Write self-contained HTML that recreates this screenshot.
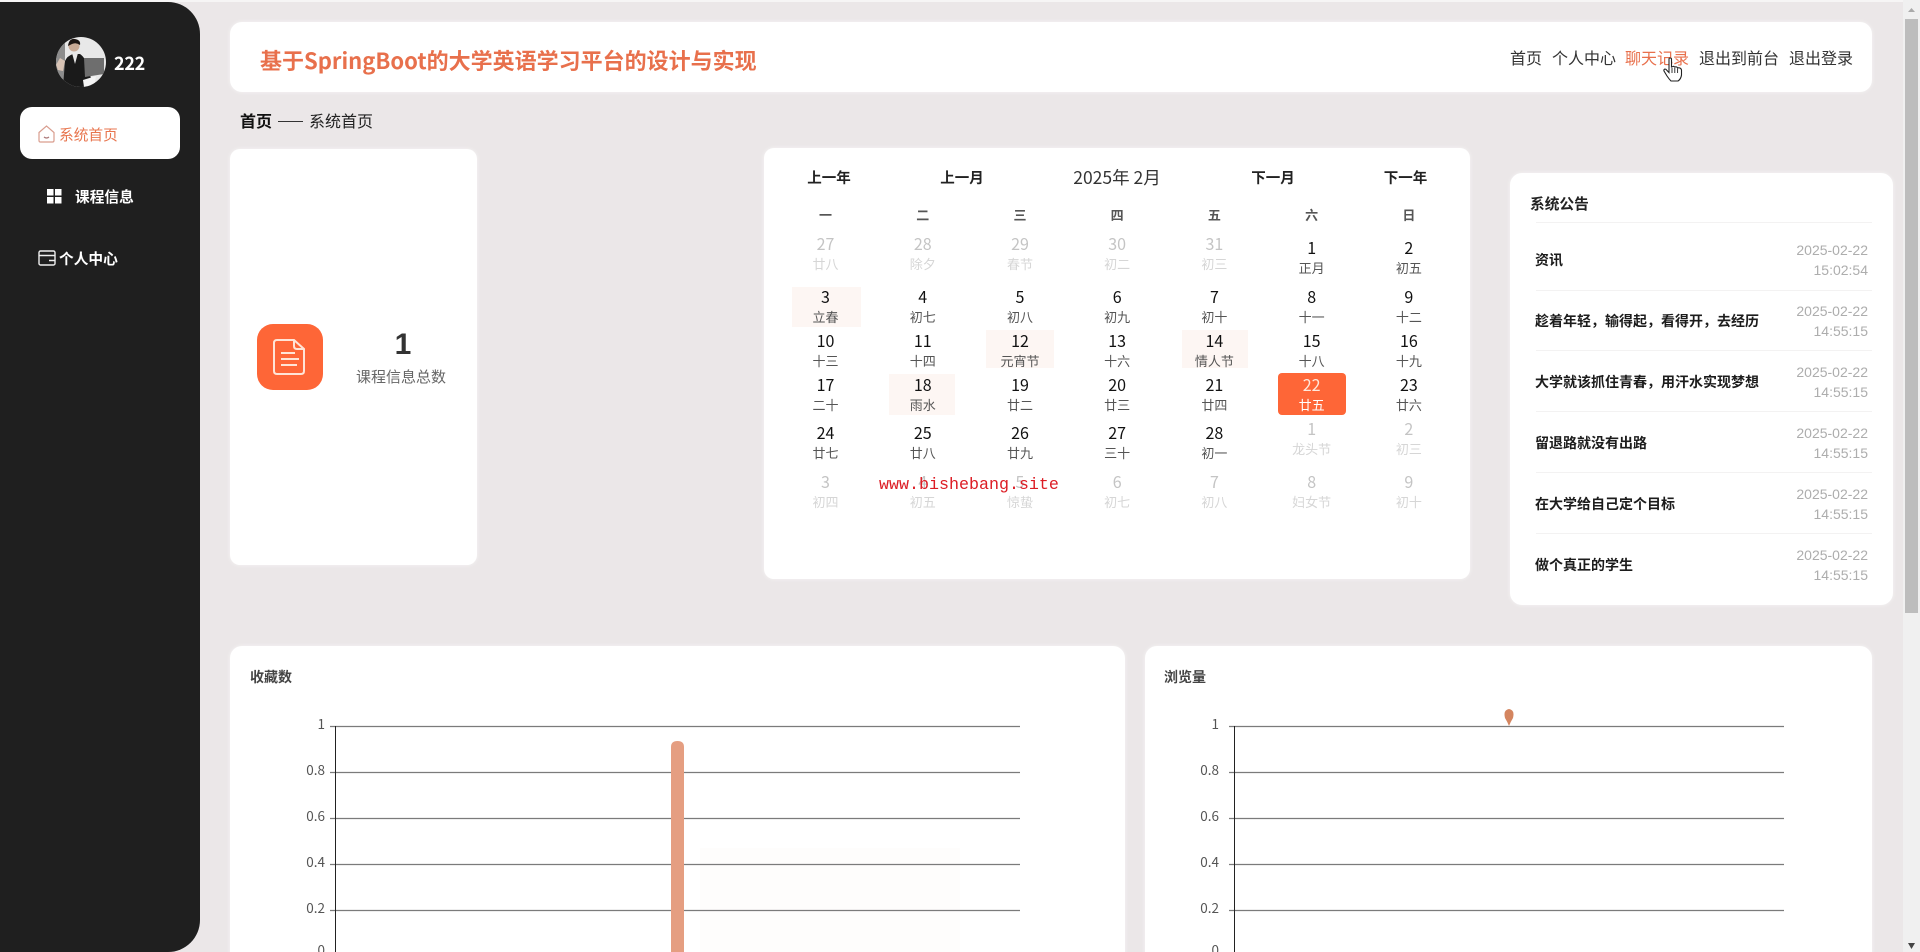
<!DOCTYPE html>
<html lang="zh"><head><meta charset="utf-8"><title>系统首页</title>
<style>
*{box-sizing:border-box;margin:0;padding:0}
html,body{width:1920px;height:952px;overflow:hidden;background:#ebe7e8}
body{position:relative;font-family:"Noto Sans CJK SC","Liberation Sans",sans-serif}
.a{position:absolute;white-space:nowrap}
.card{position:absolute;background:#fff;border-radius:12px;box-shadow:0 0 4px rgba(255,255,255,.6)}
.row{position:absolute;left:776.9px;width:680.6px;display:grid;grid-template-columns:repeat(7,1fr);text-align:center}
.row>div{position:relative}
.row b{display:block;font-weight:400;font-size:16px;line-height:20px;color:#111}
.row i{display:block;font-style:normal;font-size:13px;line-height:20px;margin-top:1px;color:#555}
.row .g b{color:#c4c4c4}.row .g i{color:#d6d6d6}
.row .up{top:-4px}
.hl{position:absolute;background:#fdf6f3}
.n{position:absolute;left:1535px;font-size:14px;font-weight:700;color:#1c1c1c;line-height:20px;white-space:nowrap}
.d{position:absolute;right:52px;width:120px;text-align:right;font-size:14px;line-height:20px;color:#adadad;font-family:"Liberation Sans",sans-serif}
.s{position:absolute;left:1536px;width:336px;height:1px;background:#f3f2f2}
.lb{position:absolute;width:40px;text-align:right;font-size:13.5px;line-height:14px;color:#555;font-family:"Noto Sans CJK SC",sans-serif}
</style></head><body>
<div class="a" style="left:0;top:0;width:1903px;height:2px;background:#f6f5f5"></div>

<!-- sidebar -->
<div class="a" style="left:0;top:2px;width:200px;height:950px;background:#1f1f1f;border-radius:0 32px 32px 0"></div>
<svg class="a" style="left:56px;top:37px" width="50" height="50" viewBox="0 0 50 50">
<defs><clipPath id="av"><circle cx="25" cy="25" r="25"/></clipPath></defs>
<g clip-path="url(#av)"><rect width="50" height="50" fill="#e8e8e8"/>
<rect x="0" y="0" width="9" height="50" fill="#8c8c8c"/>
<path d="M7 50 L9 24 Q11 19 17 17 L24 17 Q30 21 32 32 L38 50Z" fill="#1a1a1a"/>
<circle cx="18" cy="9" r="5.5" fill="#c9a994"/><path d="M12 9 Q13 1 19 2 Q25 3 24 8 Q20 5 16 7Z" fill="#1d1512"/>
<path d="M16 16 L19 27 L22 16Z" fill="#e8e8e8"/>
<path d="M28 21 L48 21 L48 37 L29 40Z" fill="#6e6e6e"/>
<path d="M0 28 L4 21 L9 24 L7 34 L2 33Z" fill="#d8c3b5"/>
<path d="M27 43 L40 39 L38 50 L28 50Z" fill="#f4f4f4"/></g></svg>
<div class="a" style="left:114px;top:50px;font-size:18px;line-height:26px;color:#fff;font-weight:700;font-family:'Noto Sans CJK SC',sans-serif;letter-spacing:-.3px">222</div>

<div class="a" style="left:20px;top:107px;width:160px;height:52px;background:#fff;border-radius:12px"></div>
<svg class="a" style="left:38px;top:125px" width="17" height="18" viewBox="0 0 17 18" fill="none" stroke="#d99d8e" stroke-width="1.2"><path d="M1 7.5 L8.5 1 L16 7.5 V15.5 Q16 17 14.5 17 H2.5 Q1 17 1 15.500Z"/><path d="M6 12 Q8.500 14 11 12" stroke="#a77"/></svg>
<div class="a" style="left:59px;top:125px;font-size:14.7px;line-height:20px;color:#e8764f">系统首页</div>

<svg class="a" style="left:47px;top:189px" width="15" height="15" fill="#fff"><rect width="6.500" height="6.500"/><rect x="8" width="6.500" height="6.500"/><rect y="8" width="6.500" height="6.500"/><rect x="8" y="8" width="6.500" height="6.500"/></svg>
<div class="a" style="left:75px;top:187px;font-size:14.7px;line-height:20px;color:#fff;font-weight:700">课程信息</div>

<svg class="a" style="left:38px;top:250px" width="18" height="16" viewBox="0 0 18 16" fill="none" stroke="#eee" stroke-width="1.4"><rect x="1" y="1" width="16" height="14" rx="1.500"/><path d="M1 5.500H17M11 10.500H17"/></svg>
<div class="a" style="left:59px;top:249px;font-size:14.7px;line-height:20px;color:#fff;font-weight:700">个人中心</div>

<!-- header -->
<div class="card" style="left:230px;top:22px;width:1642px;height:70px"></div>
<div class="a" style="left:260px;top:44px;font-size:22px;line-height:32px;font-weight:700;color:#e8704c">基于SpringBoot的大学英语学习平台的设计与实现</div>
<div class="a" style="left:1510px;top:45px;font-size:16px;line-height:24px;color:#333">首页</div>
<div class="a" style="left:1552px;top:45px;font-size:16px;line-height:24px;color:#333">个人中心</div>
<div class="a" style="left:1625px;top:45px;font-size:16px;line-height:24px;color:#e8704c">聊天记录</div>
<div class="a" style="left:1699px;top:45px;font-size:16px;line-height:24px;color:#333">退出到前台</div>
<div class="a" style="left:1789px;top:45px;font-size:16px;line-height:24px;color:#333">退出登录</div>
<svg class="a" style="left:1663px;top:57px" width="20" height="25" viewBox="0 0 20 25"><path d="M6 2 Q6 1 7 1 Q8.500 1 8.500 2 V10 L10 9.500 Q11 9 11.500 10 L13 9.800 Q14 9.800 14.500 10.800 L16 10.800 Q18 11 18.500 13 L18.500 18 Q18 22 15 24 H8 Q6 22 4 19 L1 14 Q0.500 12.500 2 12 Q3 12 4 13.500 L6 15.500Z" fill="#fff" stroke="#222" stroke-width="1.1"/><path d="M9 11V16M11.800 11V16M14.600 11.500V16" stroke="#222" stroke-width=".9"/></svg>

<!-- breadcrumb -->
<div class="a" style="left:240px;top:108px;font-size:16px;line-height:24px;font-weight:700;color:#111">首页</div>
<div class="a" style="left:278px;top:121px;width:25px;height:1px;background:#333"></div>
<div class="a" style="left:309px;top:108px;font-size:16px;line-height:24px;color:#222">系统首页</div>

<!-- stat card -->
<div class="card" style="left:230px;top:149px;width:247px;height:416px;border-radius:10px"></div>
<div class="a" style="left:257px;top:324px;width:66px;height:66px;border-radius:16px;background:#fe6637"></div>
<svg class="a" style="left:272px;top:338px" width="34" height="38" viewBox="0 0 34 38" fill="none" stroke="#ffe4d6" stroke-width="2"><path d="M5 2 H22 L32 11 V33 Q32 36 29 36 H5 Q2 36 2 33 V5 Q2 2 5 2Z"/><path d="M22 2 V8 Q22 11 25 11 H32"/><path d="M9 15H23M9 21H27M9 27H25"/></svg>
<div class="a" style="left:383px;top:325px;width:40px;text-align:center;font-size:30px;line-height:40px;font-weight:700;color:#333;font-family:'Liberation Sans',sans-serif">1</div>
<div class="a" style="left:356px;top:366px;font-size:15px;line-height:22px;color:#666">课程信息总数</div>

<!-- calendar -->
<div class="card" style="left:764px;top:148px;width:706px;height:431px;border-radius:10px"></div>
<div class="hl" style="left:792px;top:287px;width:69px;height:40px"></div>
<div class="hl" style="left:986px;top:330px;width:68px;height:38px"></div>
<div class="hl" style="left:1182px;top:330px;width:66px;height:38px"></div>
<div class="hl" style="left:889px;top:374px;width:66px;height:41px"></div>
<div class="a" style="left:1278px;top:373px;width:68px;height:42px;background:#fe6637;border-radius:4px"></div>

<div class="a" style="left:829px;top:167px;transform:translateX(-50%);font-size:14.5px;line-height:22px;font-weight:700;color:#222">上一年</div>
<div class="a" style="left:962px;top:167px;transform:translateX(-50%);font-size:14.5px;line-height:22px;font-weight:700;color:#222">上一月</div>
<div class="a" style="left:1117px;top:165px;transform:translateX(-50%);font-size:17.5px;line-height:26px;color:#333">2025年 2月</div>
<div class="a" style="left:1273px;top:167px;transform:translateX(-50%);font-size:14.5px;line-height:22px;font-weight:700;color:#222">下一月</div>
<div class="a" style="left:1405.500px;top:167px;transform:translateX(-50%);font-size:14.5px;line-height:22px;font-weight:700;color:#222">下一年</div>

<div class="row" style="top:205px;font-size:13px;line-height:20px;font-weight:700;color:#555"><div>一</div><div>二</div><div>三</div><div>四</div><div>五</div><div>六</div><div>日</div></div>

<div class="row" style="top:237px">
<div class="g up"><b>27</b><i>廿八</i></div><div class="g up"><b>28</b><i>除夕</i></div><div class="g up"><b>29</b><i>春节</i></div><div class="g up"><b>30</b><i>初二</i></div><div class="g up"><b>31</b><i>初三</i></div><div><b>1</b><i>正月</i></div><div><b>2</b><i>初五</i></div></div>
<div class="row" style="top:286px">
<div><b>3</b><i>立春</i></div><div><b>4</b><i>初七</i></div><div><b>5</b><i>初八</i></div><div><b>6</b><i>初九</i></div><div><b>7</b><i>初十</i></div><div><b>8</b><i>十一</i></div><div><b>9</b><i>十二</i></div></div>
<div class="row" style="top:330px">
<div><b>10</b><i>十三</i></div><div><b>11</b><i>十四</i></div><div><b>12</b><i>元宵节</i></div><div><b>13</b><i>十六</i></div><div><b>14</b><i>情人节</i></div><div><b>15</b><i>十八</i></div><div><b>16</b><i>十九</i></div></div>
<div class="row" style="top:374px">
<div><b>17</b><i>二十</i></div><div><b>18</b><i>雨水</i></div><div><b>19</b><i>廿二</i></div><div><b>20</b><i>廿三</i></div><div><b>21</b><i>廿四</i></div><div><b style="color:#ffe9dd">22</b><i style="color:#fff">廿五</i></div><div><b>23</b><i>廿六</i></div></div>
<div class="row" style="top:422px">
<div><b>24</b><i>廿七</i></div><div><b>25</b><i>廿八</i></div><div><b>26</b><i>廿九</i></div><div><b>27</b><i>三十</i></div><div><b>28</b><i>初一</i></div><div class="g up"><b>1</b><i>龙头节</i></div><div class="g up"><b>2</b><i>初三</i></div></div>
<div class="row" style="top:471px">
<div class="g"><b>3</b><i>初四</i></div><div class="g"><b>4</b><i>初五</i></div><div class="g"><b>5</b><i>惊蛰</i></div><div class="g"><b>6</b><i>初七</i></div><div class="g"><b>7</b><i>初八</i></div><div class="g"><b>8</b><i>妇女节</i></div><div class="g"><b>9</b><i>初十</i></div></div>
<div class="a" style="left:879px;top:476px;font-size:16.67px;line-height:20px;color:#dc1c24;font-family:'Liberation Mono',monospace">www.bishebang.site</div>

<!-- notices -->
<div class="card" style="left:1510px;top:173px;width:383px;height:432px"></div>
<div class="a" style="left:1530px;top:194px;font-size:14.7px;line-height:20px;font-weight:700;color:#222">系统公告</div>
<div class="s" style="top:222px"></div>
<div class="n" style="top:250px">资讯</div><div class="d" style="top:240px">2025-02-22<br>15:02:54</div><div class="s" style="top:290px"></div>
<div class="n" style="top:311px">趁着年轻，输得起，看得开，去经历</div><div class="d" style="top:301px">2025-02-22<br>14:55:15</div><div class="s" style="top:350px"></div>
<div class="n" style="top:372px">大学就该抓住青春，用汗水实现梦想</div><div class="d" style="top:362px">2025-02-22<br>14:55:15</div><div class="s" style="top:411px"></div>
<div class="n" style="top:433px">留退路就没有出路</div><div class="d" style="top:423px">2025-02-22<br>14:55:15</div><div class="s" style="top:472px"></div>
<div class="n" style="top:494px">在大学给自己定个目标</div><div class="d" style="top:484px">2025-02-22<br>14:55:15</div><div class="s" style="top:533px"></div>
<div class="n" style="top:555px">做个真正的学生</div><div class="d" style="top:545px">2025-02-22<br>14:55:15</div>

<!-- charts -->
<div class="card" style="left:230px;top:646px;width:895px;height:340px"></div>
<div class="card" style="left:1145px;top:646px;width:727px;height:340px"></div>
<div class="a" style="left:250px;top:667px;font-size:14px;line-height:20px;font-weight:700;color:#444">收藏数</div>
<div class="a" style="left:1164px;top:667px;font-size:14px;line-height:20px;font-weight:700;color:#444">浏览量</div>

<svg class="a" style="left:0;top:0" width="1920" height="952">
<rect x="700" y="848" width="260" height="104" fill="#fefdfc"/>
<g stroke="#7b7b7b" stroke-width="1.200">
<path d="M330 726.500H1020M330 772.500H1020M330 818.500H1020M330 864.500H1020M330 910.500H1020"/>
<path d="M1229 726.500H1784M1229 772.500H1784M1229 818.500H1784M1229 864.500H1784M1229 910.500H1784"/>
</g>
<path d="M335.500 726V952M1234.500 726V952" stroke="#222" stroke-width="1"/>
<path d="M671 952V747 Q671 741 677.500 741 Q684 741 684 747V952Z" fill="#e59e81"/>
<path d="M1509 726 Q1507.500 722 1505 718 Q1503 710 1509 709 Q1515 710 1513 718 Q1510.500 722 1509 726Z" fill="#d4855f"/>
</svg>
<div class="lb" style="left:285px;top:716px">1</div><div class="lb" style="left:285px;top:762px">0.8</div><div class="lb" style="left:285px;top:808px">0.6</div><div class="lb" style="left:285px;top:854px">0.4</div><div class="lb" style="left:285px;top:900px">0.2</div><div class="lb" style="left:285px;top:942px">0</div>
<div class="lb" style="left:1179px;top:716px">1</div><div class="lb" style="left:1179px;top:762px">0.8</div><div class="lb" style="left:1179px;top:808px">0.6</div><div class="lb" style="left:1179px;top:854px">0.4</div><div class="lb" style="left:1179px;top:900px">0.2</div><div class="lb" style="left:1179px;top:942px">0</div>

<!-- scrollbar -->
<div class="a" style="left:1903px;top:0;width:17px;height:952px;background:#f0f0f0"></div>
<div class="a" style="left:1905px;top:19px;width:13px;height:594px;background:#bdbdbd"></div>
<svg class="a" style="left:1903px;top:0" width="17" height="952"><path d="M8.500 8L12 12H5Z" fill="#aaa"/><path d="M8.500 949L5 943H12Z" fill="#444"/></svg>
</body></html>
